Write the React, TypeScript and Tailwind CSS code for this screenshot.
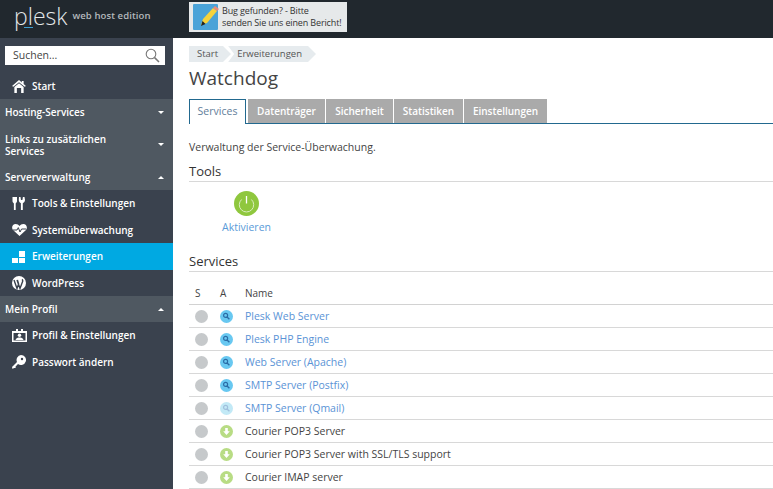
import React from "react";

const font = { fontFamily: '"Open Sans", sans-serif' };

function Caret({ up }: { up?: boolean }) {
  return (
    <svg width="6" height="3" viewBox="0 0 6 3" className="ml-auto mr-[8px] shrink-0">
      <path d={up ? "M0 3 L3 0 L6 3 Z" : "M0 0 L3 3 L6 0 Z"} fill="#fff" />
    </svg>
  );
}

function Section({ label, up, wrap }: { label: React.ReactNode; up?: boolean; wrap?: boolean }) {
  return (
    <div className={`flex items-center bg-[#4f5861] pl-[5px] pr-[1px] text-[10px] leading-[12px] font-semibold text-white ${wrap ? "h-[39px]" : "h-[26px]"}`}>
      <span className="w-[130px]">{label}</span>
      <Caret up={up} />
    </div>
  );
}

function Item({ label, icon, active, h = "h-[26px]" }: { label: string; icon: React.ReactNode; active?: boolean; h?: string }) {
  return (
    <div className={`flex items-center pl-[12px] text-[10px] font-semibold text-white ${h} ${active ? "bg-[#00a9e2]" : ""}`}>
      <span className="flex w-[20px] shrink-0 justify-start">{icon}</span>
      <span>{label}</span>
    </div>
  );
}

const Home = (
  <svg width="14" height="13" viewBox="0 0 15 14" fill="#fff">
    <path d="M7.5 0 L10.5 2.6 V1 H12.5 V4.3 L15 6.5 L13.6 7.4 L7.5 2.3 L1.4 7.4 L0 6.5 Z" />
    <path d="M2.5 7.5 L7.5 3.4 L12.5 7.5 V14 H9.8 V8.5 H5.2 V14 H2.5 Z" />
  </svg>
);
const Tools = (
  <svg width="14" height="13" viewBox="0 0 14 13" fill="#fff">
    <path d="M0.5 0 H5 V4 C5 5.5 4 6 3.7 6.4 V13 H1.9 V6.4 C1.5 6 0.5 5.5 0.5 4 Z" />
    <path d="M7 0 L8.5 0 L9 3 H10.4 L10.9 0 L12.5 0 L13 3 C13 5 11.4 5.8 10.8 6.2 V13 H8.9 V6.2 C8.2 5.8 6.8 5 6.8 3 Z" />
  </svg>
);
const Heart = (
  <svg width="15" height="12" viewBox="0 0 15 12">
    <path d="M7.5 12 L1 6 C-1 3.4 0.6 0 3.7 0 C5.4 0 6.6 0.8 7.5 2 C8.4 0.8 9.6 0 11.3 0 C14.4 0 16 3.4 14 6 Z" fill="#fff" />
    <path d="M1 6 H5 L6.3 3.6 L8 8 L9.6 5 H14" fill="none" stroke="#3a424e" strokeWidth="1" />
  </svg>
);
const Blocks = (
  <svg width="14" height="12" viewBox="0 0 14 12" fill="#fff">
    <rect x="0" y="7" width="6" height="5" />
    <rect x="7" y="7" width="6" height="5" />
    <rect x="7" y="0" width="6" height="6" />
  </svg>
);
const Wp = (
  <svg width="14" height="14" viewBox="0 0 14 14">
    <circle cx="7" cy="7" r="7" fill="#fff" />
    <path d="M2 4 L5 12.5 L6.6 8 L5.4 4 M5 4 L8 12.5 L10.6 5.5 C11 4.5 10.5 3.8 10 3.4" fill="none" stroke="#3a424e" strokeWidth="1.4" />
  </svg>
);
const Profile = (
  <svg width="15" height="13" viewBox="0 0 15 13" fill="#fff">
    <path d="M0 2 H4 V0 H6 V2 H9 V0 H11 V2 H15 V13 H0 Z M1.5 4 V11.5 H13.5 V4 Z" />
    <circle cx="7.5" cy="6.2" r="1.7" />
    <path d="M3.5 11 C4 9 6 8.6 7.5 8.6 C9 8.6 11 9 11.5 11 Z" />
  </svg>
);
const Key = (
  <svg width="14" height="14" viewBox="0 0 14 14" fill="#fff">
    <path d="M9 0 A5 5 0 1 1 6 9 L3.6 11.4 V13 H2 L0.6 14 L0 12 L5 7 A5 5 0 0 1 9 0 Z" />
    <circle cx="10" cy="4" r="1.2" fill="#3a424e" />
  </svg>
);

const MagIcon = ({ pale }: { pale?: boolean }) => (
  <svg width="13" height="13" viewBox="0 0 13 13">
    <circle cx="6.5" cy="6.5" r="6.5" fill={pale ? "#c2e9f6" : "#68c8f1"} />
    <circle cx="5.6" cy="5.4" r="2" fill="none" stroke={pale ? "#9fbfdc" : "#2a6ca6"} strokeWidth="1.2" />
    <path d="M7 7 L9.4 9.2" stroke={pale ? "#9fbfdc" : "#2a6ca6"} strokeWidth="1.4" />
  </svg>
);
const DownIcon = () => (
  <svg width="13" height="13" viewBox="0 0 13 13">
    <circle cx="6.5" cy="6.5" r="6.5" fill="#b8dc84" />
    <path d="M5.2 3 H7.8 V6.2 H9.8 L6.5 10 L3.2 6.2 H5.2 Z" fill="#fff" />
  </svg>
);

const rows: { name: string; kind: "mag" | "pale" | "down" }[] = [
  { name: "Plesk Web Server", kind: "mag" },
  { name: "Plesk PHP Engine", kind: "mag" },
  { name: "Web Server (Apache)", kind: "mag" },
  { name: "SMTP Server (Postfix)", kind: "mag" },
  { name: "SMTP Server (Qmail)", kind: "pale" },
  { name: "Courier POP3 Server", kind: "down" },
  { name: "Courier POP3 Server with SSL/TLS support", kind: "down" },
  { name: "Courier IMAP server", kind: "down" },
];

export default function App() {
  return (
    <div style={font} className="flex h-[489px] w-[773px] flex-col overflow-hidden bg-white text-[#333]">
      <header className="flex h-[38px] shrink-0 items-start bg-[#21282e]">
        <div className="flex w-[189px] shrink-0 items-start pl-[14px]">
          <span className="relative mt-[1px] text-[23px] leading-[30px] font-light text-[#e4e7e9]">
            plesk
            <span className="absolute top-[26px] left-[10px] h-px w-[9px] bg-[#3f9fd0]" />
          </span>
          <span className="mt-[9px] ml-[5px] text-[9.5px] leading-[14px] font-semibold tracking-[0.1px] whitespace-nowrap text-[#b4b9bd]">web host edition</span>
        </div>
        <div className="mt-[2px] flex h-[30px] w-[158px] items-center bg-[#e6e9ea] pl-[4px]">
          <svg width="26" height="26" viewBox="0 0 26 26" className="shrink-0">
            <rect x="0" y="0" width="25" height="26" rx="1" fill="#4aa3d8" />
            <path d="M8 21 L10 15 L20 4 L24 7 L14 19 Z" fill="#f6d33c" />
            <path d="M20 4 L22 2 L26 5 L24 7 Z" fill="#e98b7b" />
            <path d="M8 22 L9.5 17 L12.5 20 Z" fill="#222" />
          </svg>
          <div className="ml-[3px] text-[9px] leading-[12px] tracking-[-0.14px] whitespace-nowrap text-[#333]">
            Bug gefunden? - Bitte<br />senden Sie uns einen Bericht!
          </div>
        </div>
      </header>
      <div className="flex min-h-0 flex-1">
        <aside className="w-[173px] shrink-0 bg-[#3a424e]">
          <div className="px-[5px] pt-[8px]">
            <div className="flex h-[19px] w-[160px] items-center justify-between bg-white pr-[5px] pl-[8px] text-[10.5px] text-[#444]">
              <span>Suchen...</span>
              <svg width="15" height="15" viewBox="0 0 15 15" fill="none" stroke="#777" strokeWidth="1.1">
                <circle cx="6" cy="6" r="4.8" />
                <path d="M9.6 9.6 L14 14" strokeWidth="1.5" />
              </svg>
            </div>
          </div>
          <div className="mt-[8px]">
            <Item label="Start" icon={Home} />
            <Section label="Hosting-Services" />
            <Section label="Links zu zusätzlichen Services" wrap />
            <Section label="Serververwaltung" up />
            <Item label="Tools & Einstellungen" icon={Tools} h="h-[27px]" />
            <Item label="Systemüberwachung" icon={Heart} />
            <Item label="Erweiterungen" icon={Blocks} active h="h-[27px]" />
            <Item label="WordPress" icon={Wp} />
            <Section label="Mein Profil" up />
            <Item label="Profil & Einstellungen" icon={Profile} h="h-[27px]" />
            <Item label="Passwort ändern" icon={Key} />
          </div>
        </aside>
        <main className="min-w-0 flex-1 pt-[8px] pl-[16px]">
          <div className="flex h-[16px] items-center text-[9.5px] text-[#555]">
            <span className="flex h-full items-center bg-[#e6ebee] pr-[5px] pl-[8px]">Start</span>
            <svg width="8" height="16" viewBox="0 0 8 16" className="shrink-0">
              <path d="M0 0 L8 8 L0 16 Z" fill="#e6ebee" />
            </svg>
            <span className="-ml-[3px] flex h-full items-center bg-[#e6ebee] pr-[6px] pl-[9px] [clip-path:polygon(0_0,100%_0,100%_100%,0_100%,6px_50%)]">Erweiterungen</span>
            <svg width="8" height="16" viewBox="0 0 8 16" className="shrink-0">
              <path d="M0 0 L8 8 L0 16 Z" fill="#e6ebee" />
            </svg>
          </div>
          <h1 className="mt-[3px] text-[19px] leading-[27px] font-normal text-[#444]">Watchdog</h1>
          <div className="mt-[7px] flex h-[25px] items-stretch border-b border-[#22698f] text-[10px] font-semibold">
            <div className="-mb-px flex w-[57px] items-center justify-center border border-b-0 border-[#22698f] bg-white text-[10.5px] font-normal text-[#5f7d9a]">Services</div>
            <div className="ml-[2px] flex w-[77px] items-center justify-center bg-[#aaaaaa] text-white">Datenträger</div>
            <div className="ml-px flex w-[67px] items-center justify-center bg-[#aaaaaa] text-white">Sicherheit</div>
            <div className="ml-px flex w-[69px] items-center justify-center bg-[#aaaaaa] text-white">Statistiken</div>
            <div className="ml-px flex w-[83px] items-center justify-center bg-[#aaaaaa] text-white">Einstellungen</div>
          </div>
          <p className="mt-[16px] text-[10.5px] leading-[14px] text-[#444]">Verwaltung der Service-Überwachung.</p>
          <h2 className="mt-[8px] border-b border-[#d8d8d8] pb-[1px] text-[13px] leading-[18px] font-normal text-[#333]">Tools</h2>
          <div className="mt-[9px] flex w-[115px] flex-col items-center">
            <svg width="25" height="25" viewBox="0 0 25 25">
              <circle cx="12.5" cy="12.5" r="12.5" fill="#8fc73e" />
              <path d="M7.6 8.5 A7.2 7.2 0 1 0 17.4 8.5" fill="none" stroke="#d9edbd" strokeWidth="1" />
              <path d="M12.5 5 V12.5" stroke="#fff" strokeWidth="1.3" />
            </svg>
            <span className="mt-[4px] text-[10.5px] leading-[14px] text-[#5a9bd8]">Aktivieren</span>
          </div>
          <h2 className="mt-[18px] border-b border-[#d8d8d8] pb-[1px] text-[13px] leading-[18px] font-normal text-[#333]">Services</h2>
          <div className="flex h-[33px] items-end border-b border-[#d2d2d2] pb-[4px] text-[10px] leading-[14px] text-[#444]">
            <span className="w-[31px] pl-[6px]">S</span>
            <span className="w-[25px]">A</span>
            <span>Name</span>
          </div>
          {rows.map((r) => (
            <div key={r.name} className="flex h-[23px] items-center border-b border-[#d8d8d8] text-[10.5px]">
              <span className="ml-[6px] h-[13px] w-[13px] shrink-0 rounded-full bg-[#c6c9cb]" />
              <span className="ml-[12px] flex w-[25px] shrink-0">
                {r.kind === "down" ? <DownIcon /> : <MagIcon pale={r.kind === "pale"} />}
              </span>
              <span className={`pt-[2px] ${r.kind === "down" ? "text-[#444]" : "text-[#5a93d6]"}`}>{r.name}</span>
            </div>
          ))}
        </main>
      </div>
    </div>
  );
}
